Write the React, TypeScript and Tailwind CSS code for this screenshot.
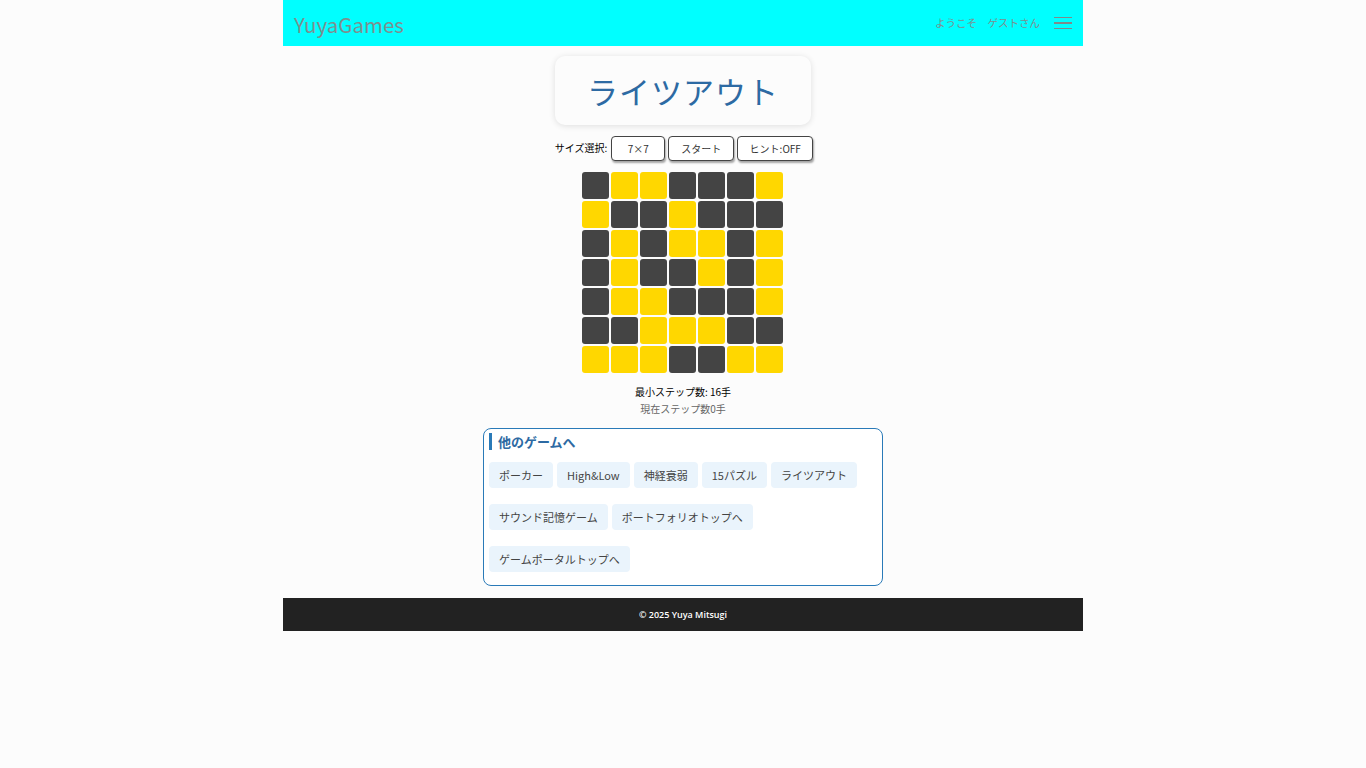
import React, { useState } from "react";

const jp = { fontFamily: '"Noto Sans CJK JP", "Noto Sans", sans-serif' };

const initial: number[][] = [
  [0, 1, 1, 0, 0, 0, 1],
  [1, 0, 0, 1, 0, 0, 0],
  [0, 1, 0, 1, 1, 0, 1],
  [0, 1, 0, 0, 1, 0, 1],
  [0, 1, 1, 0, 0, 0, 1],
  [0, 0, 1, 1, 1, 0, 0],
  [1, 1, 1, 0, 0, 1, 1],
];

const links = [
  "ポーカー",
  "High&Low",
  "神経衰弱",
  "15パズル",
  "ライツアウト",
  "サウンド記憶ゲーム",
  "ポートフォリオトップへ",
  "ゲームポータルトップへ",
];

const Header: React.FC = () => (
  <header className="h-[46px] bg-[#00ffff] flex items-center justify-between pl-[11px] pr-[11px]">
    <span className="mt-[3px] text-[20.5px] text-[#7d8f8f] leading-none">YuyaGames</span>
    <div className="flex items-center gap-[14px]">
      <span className="text-[10.5px] text-[#7d8f8f]">ようこそ　ゲストさん</span>
      <div className="flex flex-col gap-[4px] w-[18px]">
        <span className="h-px bg-[#808a8a]" />
        <span className="h-[2px] bg-[#808a8a]" />
        <span className="h-px bg-[#808a8a]" />
      </div>
    </div>
  </header>
);

export default function App() {
  const [board, setBoard] = useState(initial);
  const [steps, setSteps] = useState(0);

  const toggle = (r: number, c: number) => {
    const next = board.map((row) => [...row]);
    [[0, 0], [1, 0], [-1, 0], [0, 1], [0, -1]].forEach(([dr, dc]) => {
      const y = r + dr;
      const x = c + dc;
      if (y >= 0 && y < 7 && x >= 0 && x < 7) next[y][x] = next[y][x] ? 0 : 1;
    });
    setBoard(next);
    setSteps(steps + 1);
  };

  return (
    <div className="min-h-screen bg-[#fcfcfc]" style={jp}>
      <div className="w-[800px] mx-auto">
        <Header />

        <main className="flex flex-col items-center">
          <div className="mt-[10px] w-[256px] h-[69px] rounded-[10px] bg-[#fcfcfc] shadow-[0_1px_6px_rgba(0,0,0,0.12)] flex items-center justify-center">
            <h1 className="text-[31px] text-[#2d6aa3] tracking-[1px] leading-none">ライツアウト</h1>
          </div>

          <div className="mt-[11px] flex items-center gap-[3px] text-[10px] ml-[2px]">
            <span className="text-black mr-[1px] -mt-[3px]">サイズ選択:</span>
            <button className="w-[54px] h-[25px] border border-[#444] rounded-[4px] bg-white shadow-[1px_2px_2px_rgba(0,0,0,0.35)] text-[#333]">
              7×7
            </button>
            <button className="w-[66px] h-[25px] border border-[#444] rounded-[4px] bg-white shadow-[1px_2px_2px_rgba(0,0,0,0.35)] text-[#333]">
              スタート
            </button>
            <button className="w-[76px] h-[25px] border border-[#444] rounded-[4px] bg-white shadow-[1px_2px_2px_rgba(0,0,0,0.35)] text-[#333]">
              ヒント:OFF
            </button>
          </div>

          <div className="mt-[11px] grid grid-cols-[repeat(7,27px)] gap-[2px] -ml-[1px]">
            {board.map((row, r) =>
              row.map((v, c) => (
                <div
                  key={`${r}-${c}`}
                  onClick={() => toggle(r, c)}
                  className={`w-[27px] h-[27px] rounded-[3px] cursor-pointer ${v ? "bg-[#ffd700]" : "bg-[#444444]"}`}
                />
              ))
            )}
          </div>

          <p className="mt-[10px] text-[10px] text-black leading-[17px]">最小ステップ数: 16手</p>
          <p className="text-[10px] text-[#666] leading-[17px]">現在ステップ数{steps}手</p>

          <section className="mt-[11px] w-[400px] border border-[#2a7ab8] rounded-[8px] px-[5px] pt-[4px] pb-[13px] bg-white">
            <h2 className="border-l-[3px] border-[#2a7ab8] pl-[6px] text-[13px] font-bold text-[#2d6aa3] leading-[17px]">
              他のゲームへ
            </h2>
            <div className="mt-[12px] flex flex-wrap gap-x-[4px] gap-y-[16px]">
              {links.map((l) => (
                <a
                  key={l}
                  href="#"
                  className="h-[26px] px-[10px] rounded-[4px] bg-[#eaf4fc] text-[11px] text-[#444] flex items-center"
                >
                  {l}
                </a>
              ))}
            </div>
          </section>
        </main>

        <footer className="mt-[12px] h-[33px] bg-[#222222] flex items-center justify-center">
          <span className="text-[9px] font-semibold text-white" style={{ fontFamily: '"Open Sans", sans-serif' }}>
            © 2025 Yuya Mitsugi
          </span>
        </footer>
      </div>
    </div>
  );
}
